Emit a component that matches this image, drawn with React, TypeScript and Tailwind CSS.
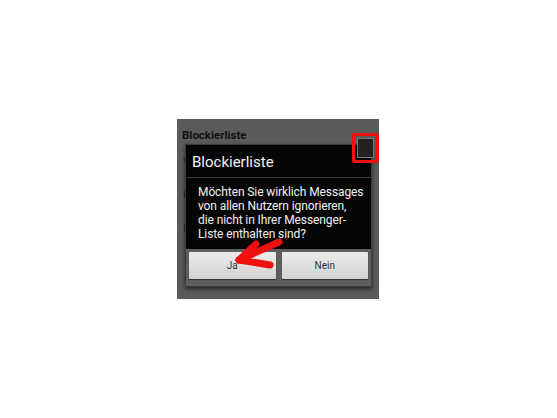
export default function App() {
  return (
    <div className="h-[418px] w-[557px] bg-white pl-[177px] pt-[119px] font-['Roboto','Liberation_Sans',sans-serif]">
      <div className="relative h-[180px] w-[202px] bg-[#5b5b5b] px-[5px] pt-[9px]">
        <p className="text-[11.5px] font-bold leading-[14px] text-[#111]">Blockierliste</p>
        <div className="mt-[14px] space-y-[20px] pl-[1px] text-[11px] leading-[13px] text-[#222]">
          <p>V</p>
          <p>Ü</p>
          <p>B</p>
        </div>

        <div className="absolute left-[8px] top-[25px] flex h-[143px] w-[187px] flex-col border border-[#3c3c3c] bg-[#050505] shadow-[0_2px_4px_rgba(0,0,0,0.6)]">
          <div className="flex h-[33px] items-center border-b border-[#3a3a3a] pl-[6px] pt-[3px] text-[15px] text-[#f2f2f2]">
            Blockierliste
          </div>
          <div className="flex-1 whitespace-nowrap pl-[12px] pt-[7px] text-[12px] leading-[14px] tracking-[-0.1px] text-[#f0f0f0]">
            <p>Möchten Sie wirklich Messages</p>
            <p>von allen Nutzern ignorieren,</p>
            <p>die nicht in Ihrer Messenger-</p>
            <p>Liste enthalten sind?</p>
          </div>
          <div className="flex h-[37px] gap-[6px] bg-[#5e5e5e] px-[3px] pt-[3px]">
            <button className="h-[27px] flex-1 rounded-[1px] bg-gradient-to-b from-[#ececec] to-[#d2d2d2] text-[10px] text-[#333] shadow-[0_1px_1px_rgba(0,0,0,0.5)]">
              Ja
            </button>
            <button className="h-[27px] flex-1 rounded-[1px] bg-gradient-to-b from-[#ececec] to-[#d2d2d2] text-[10px] text-[#333] shadow-[0_1px_1px_rgba(0,0,0,0.5)]">
              Nein
            </button>
          </div>
        </div>

        <div className="absolute left-[175px] top-[14px] h-[30px] w-[27px] rounded-[2px] border-[3px] border-[#ee1111] p-[2px]">
          <div className="h-full w-full border border-[#777] bg-[#222]" />
        </div>

        <svg className="absolute left-[53px] top-[118px]" width="55" height="35" viewBox="0 0 55 35">
          <g stroke="#f01010" strokeWidth="7" strokeLinecap="round" strokeLinejoin="round" fill="none">
            <path d="M49 5 L9 23" />
            <path d="M26 7 L9 23 L40 28" />
          </g>
        </svg>
      </div>
    </div>
  );
}
